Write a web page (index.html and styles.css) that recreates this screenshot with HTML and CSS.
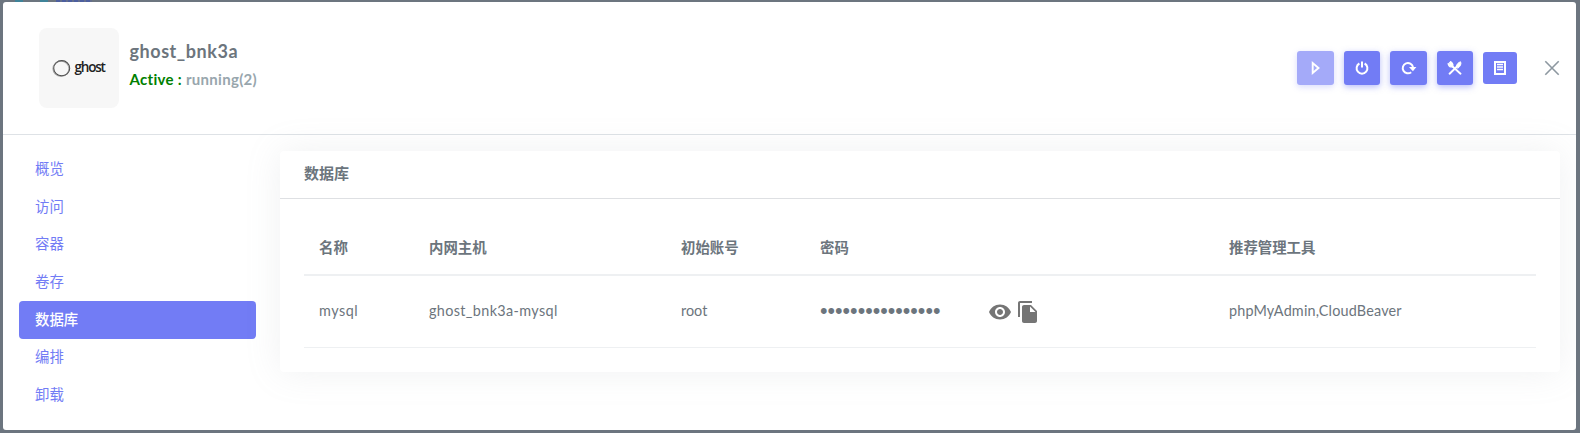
FILE: index.html
```html
<!DOCTYPE html>
<html lang="zh-CN">
<head>
<meta charset="utf-8">
<title>ghost_bnk3a</title>
<link rel="stylesheet" href="styles.css">
</head>
<body>
<div class="page-behind"><span class="behind-mark"></span><span class="behind-name"></span></div>
<main class="modal">
  <header class="modal-header">
    <div class="logo">
      <svg width="19" height="19" viewBox="0 0 19 19" fill="none"><ellipse cx="9.7" cy="9.2" rx="8" ry="7.6" stroke="#444" stroke-width="1.1"/><ellipse cx="9" cy="9.8" rx="8" ry="7.6" stroke="#777" stroke-opacity=".6" stroke-width="1.2"/></svg>
      <span class="logo-name">ghost</span>
    </div>
    <div class="heading">
      <h1 class="app-name">ghost_bnk3a</h1>
      <p class="status"><span class="status-on">Active :</span> <span class="status-text">running(2)</span></p>
    </div>
    <div class="actions">
      <button class="btn btn-disabled" aria-label="start"><svg width="14" height="14" viewBox="0 0 14 14"><path d="M3.7 2.1v9.8l5.8-4.9z" fill="none" stroke="#fff" stroke-width="1.9"/></svg></button>
      <button class="btn btn-narrow" aria-label="stop"><svg width="14" height="14" viewBox="0 0 14 14" fill="none" stroke="#fff" stroke-width="2"><path d="M4.4 2.5a5.4 5.4 0 1 0 5.2 0M7 .6v6"/></svg></button>
      <button class="btn" aria-label="restart"><svg width="16" height="14" viewBox="0 0 16 14"><path d="M10.2 11.200A5.200 5.200 0 1 1 12 6" fill="none" stroke="#fff" stroke-width="2"/><path d="M8 6h7.400l-3.500 4.200z" fill="#fff"/></svg></button>
      <button class="btn btn-narrow" aria-label="rebuild"><svg width="16" height="14" viewBox="0 0 16 14" fill="none" stroke="#fff" stroke-linecap="round"><path d="M4.5 4.5L13.5 12.7" stroke-width="1.9"/><path d="M3.5.8l2.2 2.5M1.2 2.7l2.6 2.2M2.5 1.7L5 4.5" stroke-width="1.3"/><path d="M1.4 3.2c.4 2.3 2.2 3 4.2 2.6.5-1.8-.2-3.6-1.8-4.7" stroke-width="1.4"/><path d="M2.6 12.7L10 5.5" stroke-width="1.9"/><path d="M9.2 5.8c.3-2.4 2.2-4.5 4.4-5 .9 2.1-.2 4.6-2.4 6.2z" fill="#fff" stroke-width="1"/></svg></button>
      <button class="btn btn-small" aria-label="logs"><svg width="12" height="14" viewBox="0 0 12 14"><path d="M1 1h10v12H1z" fill="none" stroke="#fff" stroke-width="2"/><path d="M3 3.5h6M3 6h6M3 8.5h6" stroke="#fff" stroke-width="1.3"/></svg></button>
    </div>
    <svg class="close" width="16" height="16" viewBox="0 0 16 16"><path d="M1.3 1.3l13.4 13.4M14.7 1.3L1.3 14.7" stroke="#8d98a0" stroke-width="1.6"/></svg>
  </header>
  <div class="modal-body">
    <nav class="menu">
      <a class="menu-item">概览</a>
      <a class="menu-item">访问</a>
      <a class="menu-item">容器</a>
      <a class="menu-item">卷存</a>
      <a class="menu-item menu-active">数据库</a>
      <a class="menu-item">编排</a>
      <a class="menu-item">卸载</a>
    </nav>
    <section class="card">
      <h2 class="card-title">数据库</h2>
      <div class="table">
        <div class="row row-head"><span>名称</span><span>内网主机</span><span>初始账号</span><span>密码</span><span>推荐管理工具</span></div>
        <div class="row row-data">
          <span class="c-name">mysql</span><span class="c-host">ghost_bnk3a-mysql</span><span class="c-user">root</span>
          <span class="secret"><span class="dots">••••••••••••••••</span>
            <svg width="24" height="24" viewBox="0 0 24 24" fill="#757575"><path d="M12 4.5C7 4.5 2.73 7.61 1 12c1.73 4.39 6 7.5 11 7.5s9.27-3.11 11-7.5c-1.73-4.39-6-7.5-11-7.5zM12 17c-2.76 0-5-2.24-5-5s2.24-5 5-5 5 2.24 5 5-2.24 5-5 5zm0-8c-1.66 0-3 1.34-3 3s1.34 3 3 3 3-1.34 3-3-1.34-3-3-3z"/></svg>
            <svg class="copy" width="24" height="24" viewBox="0 0 24 24" fill="#757575"><path d="M16 1H4c-1.1 0-2 .9-2 2v14h2V3h12V1zm-1 4 6 6v10c0 1.1-.9 2-2 2H7.99C6.89 23 6 22.1 6 21l.01-14c0-1.1.89-2 1.99-2h7zm-1 7h5.5L14 6.500V12z"/></svg>
          </span>
          <span class="c-tools">phpMyAdmin,CloudBeaver</span>
        </div>
      </div>
    </section>
  </div>
</main>
</body>
</html>
```
FILE: styles.css
```css
* { box-sizing: border-box; }
body {
  margin: 0;
  height: 433px;
  padding: 2px 4px 3px 3px;
  overflow: hidden;
  background: #6c757f;
  color: #6c757d;
  font: 14.4px/21.6px Lato, "Noto Sans CJK SC", sans-serif;
}
.page-behind { position: absolute; top: 0; left: 0; height: 2px; display: flex; }
.behind-mark { width: 33px; margin-left: 15px; border: solid #3f8399; border-width: 0 8px; }
.behind-name { width: 36px; margin-left: 8px; background: repeating-linear-gradient(90deg, #4d5f9f 0 4px, #636e8c 4px 6px); }
.modal {
  position: relative;
  height: 428px;
  border-radius: 3px;
  background: #fff;
  overflow: hidden;
}
.modal-header {
  display: flex;
  align-items: center;
  height: 133px;
  padding: 0 16px 0 36px;
  border-bottom: 1px solid #dee2e6;
}
.logo {
  width: 80px;
  height: 80px;
  border-radius: 8px;
  background: #f7f7f7;
  display: flex;
  align-items: center;
  padding-left: 13px;
  gap: 3.5px;
}
.logo-name { color: #222; font: 600 13.5px/16px "Open Sans", sans-serif; letter-spacing: -1.2px; padding-bottom: 2px; }
.heading { margin-left: 10.5px; padding-bottom: 7px; }
.app-name { margin: 0; font-size: 18px; line-height: 26px; font-weight: 700; letter-spacing: .55px; }
.status { margin: 3px 0 0; font-size: 15px; line-height: 24px; font-weight: 700; letter-spacing: .3px; }
.status-on { color: #008000; }
.status-text { color: #98a6ad; }
.actions { margin-left: auto; display: flex; align-items: center; gap: 10px; }
.btn {
  width: 37px;
  height: 34px;
  padding: 0;
  border: 0;
  border-radius: 3px;
  background: #727cf5;
  box-shadow: 0 2px 6px rgba(114, 124, 245, .5);
  display: flex;
  align-items: center;
  justify-content: center;
}
.btn-disabled { background: #a4aaf9; box-shadow: 0 2px 6px rgba(114, 124, 245, .28); }
.btn-narrow { width: 36px; }
.btn-small { width: 34px; height: 32px; box-shadow: none; }
.close { margin-left: 27px; }
.modal-body { display: flex; padding: 16px; gap: 24px; }
.menu { width: 237px; }
.menu-item {
  display: block;
  height: 37.6px;
  padding: 7.3px 16px 8.7px;
  border-radius: 4px;
  color: #727cf5;
}
.menu-active { background: #727cf5; color: #fff; font-weight: 500; }
.card {
  flex: 1;
  height: 221px;
  border-radius: 4px;
  background: #fff;
  box-shadow: 0 0 35px rgba(154, 161, 171, .15);
}
.card-title {
  height: 48px;
  margin: 0;
  padding: 0 24px;
  border-bottom: 1px solid #dee0e3;
  font-size: 15px;
  line-height: 45px;
  font-weight: 700;
}
.table { padding: 24px 24px 0; }
.row {
  display: grid;
  grid-template-columns: 110px 252px 139px 409px 1fr;
  align-items: center;
  padding-left: 15px;
}
.row-head { height: 53px; padding-bottom: 1px; border-bottom: 2px solid #eef0f2; font-weight: 700; }
.row-data { height: 72px; border-bottom: 1px solid #eef0f2; }
.c-name, .c-host, .c-user, .c-tools { white-space: nowrap; padding-bottom: 2px; }
.c-name { letter-spacing: .5px; }
.c-host { letter-spacing: .36px; }
.c-tools { letter-spacing: .18px; }
.secret { display: flex; align-items: center; }
.dots { width: 168px; padding-top: 1px; font-family: "Liberation Sans", sans-serif; font-size: 21.5px; letter-spacing: 0; }
.copy { margin-left: 4px; }
```
